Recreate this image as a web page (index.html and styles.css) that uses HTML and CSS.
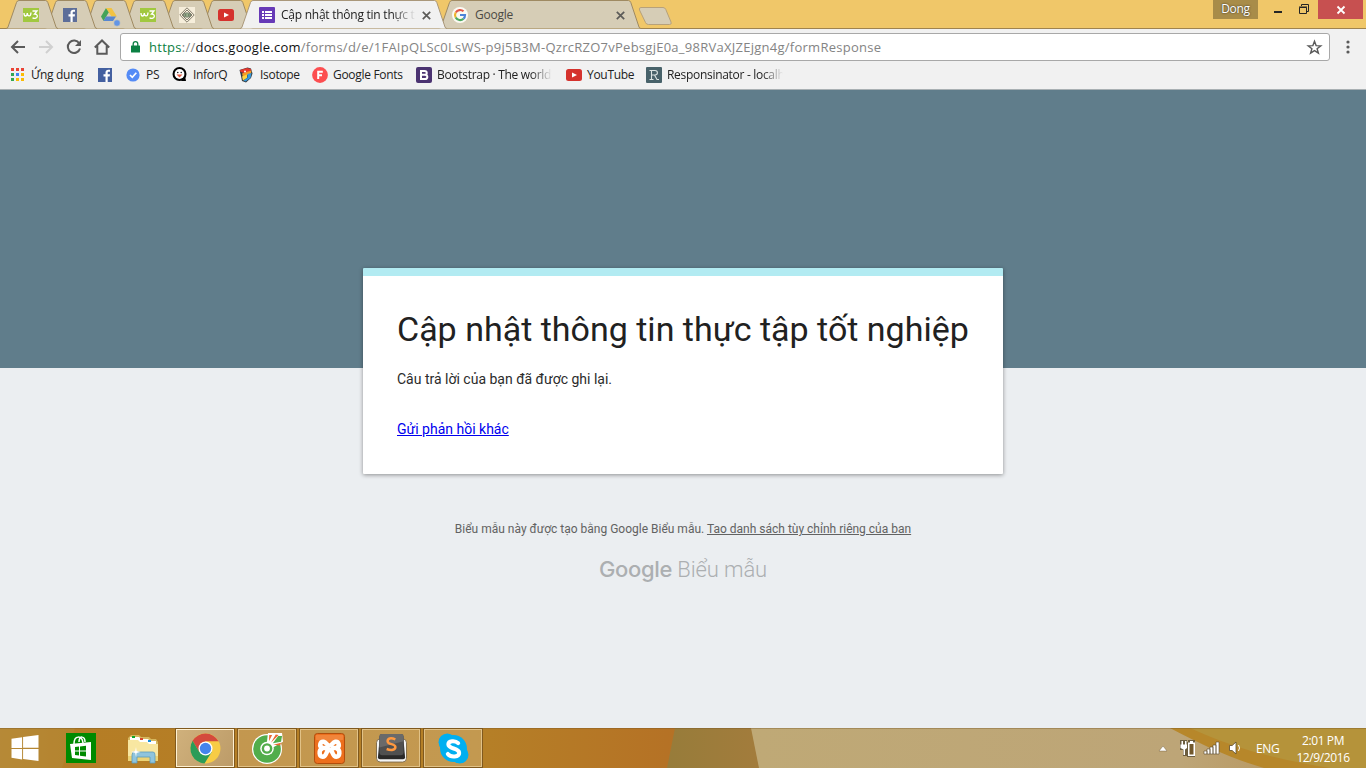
FILE: index.html
```html
<!DOCTYPE html>
<html lang="vi">
<head>
<meta charset="utf-8">
<title>Cập nhật thông tin thực tập tốt nghiệp</title>
<link rel="stylesheet" href="styles.css">
</head>
<body>
<svg width="0" height="0" class="defs">
  <defs>
    <symbol id="shape" viewBox="0 0 52 29"><path class="tab-shape" d="M0 28.500Q1.500 28.500 2 27L10.500 2.500Q11.200 .5 13 .5H39.500Q41 .5 41.800 2.500L50 27Q50.500 28.500 52 28.500"/></symbol>
    <symbol id="w3" viewBox="0 0 16 16"><path fill="#a1c83f" d="M0 1h16v14H0z"/><path fill="none" stroke="#fff" stroke-width="1.300" d="M1 6c0 4 3 4 3.300 0c.3 4 3.500 4 3.700-.5M9.500 4h4.500L11.500 7c4.500-.2 3.500 6-2 3.800"/></symbol>
    <symbol id="fb" viewBox="0 0 16 16"><path fill="currentColor" d="M1 1h14v14H1z"/><path fill="#fff" d="M8.500 15V9.500H6.500V7.300h2V5.500C8.500 3.500 9.700 2.700 11.300 2.700H13v2h-1.200c-.9 0-1.100.4-1.100 1.100v1.500H13l-.3 2.200h-2V15z"/></symbol>
    <symbol id="yt" viewBox="0 0 16 16"><rect y="2" width="16" height="12" rx="2.500" fill="#d5322d"/><path fill="#fff" d="M6 5.500v5L11 8z"/></symbol>
  </defs>
</svg>

<header class="browser">
  <div class="tabstrip">
    <div class="tab"><svg class="bg"><use href="#shape"/></svg><svg class="fav"><use href="#w3"/></svg></div>
    <div class="tab"><svg class="bg"><use href="#shape"/></svg><svg class="fav fb-muted"><use href="#fb"/></svg></div>
    <div class="tab"><svg class="bg"><use href="#shape"/></svg><svg class="fav" viewBox="0 0 16 16"><path fill="#43a35a" d="M5 1 0 9.500 2.500 14 8 5z"/><path fill="#f2c343" d="M5 1h5.500L16 9.500h-5.500z"/><path fill="#5786d1" d="M5 9.500h10L12 14H2.500z"/><circle cx="16" cy="16" r="3.200" fill="#6295e5" stroke="#d6cdb6" stroke-width=".5"/></svg></div>
    <div class="tab"><svg class="bg"><use href="#shape"/></svg><svg class="fav"><use href="#w3"/></svg></div>
    <div class="tab"><svg class="bg"><use href="#shape"/></svg><svg class="fav" viewBox="0 0 16 16"><path fill="#f6eedb" d="M0 0h16v16H0z"/><path fill="none" stroke="#756f60" stroke-width=".9" d="M8 .8 15.200 8 8 15.200.8 8zM8 3l5 5-5 5-5-5z"/><ellipse cx="8" cy="8" rx="3.800" ry="2.200" fill="#9bb08f" stroke="#5f685b" stroke-width=".7"/><path stroke="#34402f" stroke-width=".8" d="M5.800 8h1.500M9 8h1.500"/></svg></div>
    <div class="tab"><svg class="bg"><use href="#shape"/></svg><svg class="fav"><use href="#yt"/></svg></div>
    <div class="tab wide active">
      <svg class="bg" viewBox="0 0 210 29"><path class="tab-shape" d="M0 28.500Q1.500 28.500 2 27L10.500 2.500Q11.200 .5 13 .5H194.500Q196 .5 196.800 2.500L205 27Q205.500 28.500 207 28.500"/></svg>
      <svg class="fav" viewBox="0 0 16 16"><rect width="16" height="16" rx="1" fill="#673ab7"/><path fill="#fff" d="M3 4h2v2H3zm3 0h7v2H6zM3 7h2v2H3zm3 0h7v2H6zM3 10h2v2H3zm3 0h7v2H6z"/></svg>
      <span class="tab-title fade">Cập nhật thông tin thực t</span>
      <svg class="close" viewBox="0 0 9 9"><path d="m.8.8 7.400 7.400m0-7.400L.8 8.200"/></svg>
    </div>
    <div class="tab wide google">
      <svg class="bg" viewBox="0 0 210 29"><path class="tab-shape" d="M-2 28.500Q-.5 28.500 0 27L8.500 2.500Q9.200 .5 11 .5H187.500Q189 .5 189.800 2.500L198 27Q198.500 28.500 200 28.500"/></svg>
      <svg class="fav" viewBox="0 0 16 16"><circle cx="8" cy="8" r="8" fill="#fcfaf3"/><g fill="none" stroke-width="2.200"><path stroke="#e45847" d="M3.800 5.500A5 5 0 0 1 11.500 4.300"/><path stroke="#eeb52d" d="M3.700 5.500a5 5 0 0 0 0 5"/><path stroke="#4caa61" d="M3.700 10.500a5 5 0 0 0 7.800 1.200"/><path stroke="#4d83d8" d="M8 8h5c0 1.600-.5 2.800-1.500 3.700"/></g></svg>
      <span class="tab-title">Google</span>
      <svg class="close" viewBox="0 0 9 9"><path d="m.8.8 7.400 7.400m0-7.400L.8 8.200"/></svg>
    </div>
    <svg class="newtab" viewBox="0 0 34 18"><path d="M3 .5h22q2 0 2.800 2l5.200 12.500q1 2.500-1.500 2.500h-21q-2.200 0-3-2L1.500 3Q.7 .5 3 .5z"/></svg>
    <div class="window-controls">
      <span class="user">Dong</span>
      <svg class="min" viewBox="0 0 8 2"><path d="M0 0h8v2H0z"/></svg>
      <svg class="restore" viewBox="0 0 10 10"><path d="M2.500 2V.5h7v7H8M.5 3.500h7v6h-7z"/><path d="M0 3h8"/></svg>
      <span class="quit"><svg viewBox="0 0 8 8"><path d="m.5.5 7 7m0-7-7 7"/></svg></span>
    </div>
  </div>

  <div class="toolbar">
    <svg class="nav" viewBox="0 0 16 16"><path d="M15 8H2.500M8 2 2 8l6 6"/></svg>
    <svg class="nav disabled" viewBox="0 0 16 16"><path d="M1 8h12.500M8 2l6 6-6 6"/></svg>
    <svg class="nav" viewBox="0 0 16 16"><path d="M13.300 4.500A6.200 6.200 0 1 0 14 9.500"/><path class="solid" d="M15 1v6H9z"/></svg>
    <svg class="nav" viewBox="0 0 16 16"><path d="M.8 8.500 8 1.500l7.200 7M3.300 7v7.700h9.400V7"/></svg>
    <div class="omnibox">
      <svg class="lock" viewBox="0 0 9 12"><path fill="#0b8043" d="M.5 4.500h8q.5 0 .5.500v6q0 .5-.5.500h-8Q0 11.500 0 11V5q0-.5.500-.5z"/><path fill="none" stroke="#0b8043" stroke-width="1.300" d="M2.200 5V3a2.300 2.300 0 0 1 4.600 0v2"/></svg>
      <span class="url"><b class="secure">https</b>://<b>docs.google.com</b>/forms/d/e/1FAIpQLSc0LsWS-p9j5B3M-QzrcRZO7vPebsgjE0a_98RVaXJZEjgn4g/formResponse</span>
      <svg class="star" viewBox="0 0 15 15"><path d="m7.500 1.300 1.600 4.300 4.700.2-3.700 2.900 1.300 4.500-3.900-2.600-3.900 2.600 1.300-4.500L1.200 5.800l4.700-.2z"/></svg>
    </div>
    <svg class="menu" viewBox="0 0 4 14"><circle cx="2" cy="2" r="1.600"/><circle cx="2" cy="7" r="1.600"/><circle cx="2" cy="12" r="1.600"/></svg>
  </div>

  <nav class="bookmarks">
    <a class="apps"><svg viewBox="0 0 16 16"><path fill="#ea4335" d="M0 1h3v3H0zm5 0h3v3H5zm5 0h3v3h-3z"/><path fill="#34a853" d="M0 6h3v3H0zm0 5h3v3H0z"/><path fill="#4285f4" d="M5 6h3v3H5z"/><path fill="#fbbc05" d="M10 6h3v3h-3zm-5 5h3v3H5zm5 0h3v3h-3z"/></svg><span>Ứng dụng</span></a>
    <a class="facebook"><svg><use href="#fb"/></svg></a>
    <a class="ps"><svg viewBox="0 0 16 16"><circle cx="8" cy="8" r="6.600" fill="#548bf6"/><path fill="none" stroke="#fff" stroke-width="1.700" d="m5 8 2.300 2.300 4-4.500"/></svg><span>PS</span></a>
    <a class="inforq"><svg viewBox="0 0 16 16"><circle cx="7.500" cy="7" r="7" fill="#000"/><path fill="#000" d="M9 14h5l-1-5z"/><circle cx="7.500" cy="7" r="4.900" fill="#fff"/><circle cx="5.800" cy="5.500" r=".7"/><circle cx="9.200" cy="5.500" r=".7"/><path fill="#e3593f" d="M4.500 7.500h6L7.500 10.500z"/></svg><span>InforQ</span></a>
    <a class="isotope"><svg viewBox="0 0 16 16"><path fill="#343b42" d="m.5 3 8-2.500L12 1.500l1.500 5L12 11l-5 4.500L3 14 2 9z"/><path fill="#e5372d" d="m1 3 7-2 4 1-.5 3L5 6 1.500 5z"/><path fill="#f59b23" d="m3 6.500 6-2 3.500-1-.5 3L4 10z"/><path fill="#ffd43d" d="m3 9.500 5-2V11l-4 2.500z"/><path fill="#3699db" d="m8.500 7 4-1-1 5-5 3.500-2-1 4-3z"/><circle cx="6" cy="4.500" r="1" fill="#fff"/></svg><span>Isotope</span></a>
    <a class="fonts"><svg viewBox="0 0 16 16"><circle cx="8" cy="8" r="7.900" fill="#fc4e50"/><path fill="none" stroke="#fff" stroke-width="2" d="M6.200 12V4.800h4.600M6 8.300h4"/></svg><span>Google Fonts</span></a>
    <a class="bootstrap"><svg viewBox="0 0 16 16"><rect width="16" height="16" rx="2" fill="#4b3371"/><path fill="none" stroke="#fff" stroke-width="2" d="M5 4h3.500c3 0 3 3.800 0 3.800H5h4c3.200 0 3 4.200 0 4.200H5z"/></svg><span class="fade">Bootstrap · The world'</span></a>
    <a class="youtube"><svg><use href="#yt"/></svg><span>YouTube</span></a>
    <a class="responsinator"><svg viewBox="0 0 16 16"><rect width="16" height="16" rx="1" fill="#48626a"/><path fill="none" stroke="#dbe4e3" stroke-width="1.100" d="M3.500 3.500H9c3.200 0 3.200 4.500 0 4.500H6m-.5-4.500v9m-2 0h4M8.500 8l2.500 4.500h2"/></svg><span class="fade">Responsinator - localh</span></a>
  </nav>
</header>

<main class="page">
  <section class="card">
    <h1>Cập nhật thông tin thực tập tốt nghiệp</h1>
    <p>Câu trả lời của bạn đã được ghi lại.</p>
    <a href="#">Gửi phản hồi khác</a>
  </section>
  <p class="legal">Biểu mẫu này được tạo bằng Google Biểu mẫu. <a>Tao danh sách tùy chỉnh riêng của ban</a></p>
  <div class="brand"><span class="brand-name">Google</span><span class="brand-product">Biểu mẫu</span></div>
</main>

<footer class="taskbar">
  <svg class="wallpaper" viewBox="0 0 1366 40" preserveAspectRatio="none">
    <defs>
      <linearGradient id="wood"><stop stop-color="#b98b37"/><stop offset=".1" stop-color="#b57d25"/><stop offset=".7" stop-color="#b58027"/><stop offset="1" stop-color="#b57125"/></linearGradient>
      <linearGradient id="sand"><stop stop-color="#bfa976"/><stop offset=".7" stop-color="#bda577"/><stop offset="1" stop-color="#b58d4d"/></linearGradient>
      <linearGradient id="olive"><stop stop-color="#977c3a"/><stop offset="1" stop-color="#a37c3c"/></linearGradient>
    </defs>
    <path fill="url(#wood)" d="M0 0h680v40H0z"/><path fill="#b48837" opacity=".6" d="M0 0h75L62 40H0z"/>
    <path fill="url(#olive)" d="M675 0h78l8 40h-94z"/>
    <path fill="url(#sand)" d="M751 0h615v40H759z"/>
    <path fill="#b5933a" d="M1172 0h194v40h-76C1245 30 1205 15 1172 0z"/>
    <path fill="#b7872a" d="M1170 0h20c45 21 90 32 140 40h-66c-35-10-63-24-94-40z"/>
    <path stroke="#735225" stroke-opacity=".35" d="M0 .5h1366"/>
  </svg>
  <div class="launchers">
    <svg class="start" viewBox="0 0 28 28"><path fill="#fff" d="m0 4 11-1.600v11H0zm12-1.800L28 0v13.300H12zM0 14.400h11v11L0 23.700zm12 0h16V27l-16-2z"/></svg>
    <svg class="store" viewBox="0 0 30 30"><path fill="#008a00" d="M0 0h30v30H0z"/><path fill="#fff" d="m4 11 21-2v18L6 25z"/><path fill="none" stroke="#fff" stroke-width="1.500" d="M8 11c0-9 8-9 9-1M13 9c0-7 6-6 6 0"/><path fill="#008a00" d="m9 14 4-.5v4H9zm5-.6 6-.7v4.800h-6zM9 18.500h4v4L9 22zm5 0h6v5l-6-.8z"/></svg>
    <svg class="explorer" viewBox="0 0 32 30"><path fill="#d5b75e" d="M1 4 4 1h8l2 2h8l2 2h5l2 3v19H1z"/><path fill="#fff" d="M3 3h9l2 2h7l2 2h6v4H3z"/><path fill="#0aa52a" d="M5 2h3v2H5z"/><path fill="#d6482e" d="M13 4h3v2h-3z"/><path fill="#178ed8" d="M21 6h3v2h-3z"/><path fill="#f8e7a1" d="M1 6h10l2 2h7l2 2h9v17H1z"/><path fill="#ecd375" d="M1 22h30v5H1z"/><path fill="#8fc4dd" stroke="#5b9cbb" stroke-width=".8" d="M6 18h20q2 0 2 3v8h-5v-6H10v6H5v-8z"/><path fill="#fff" d="m9 13 .6 4 4 1-4 1L9 23l-.8-4-4.200-1 4.200-1z"/></svg>
    <div class="task current"><svg viewBox="0 0 30 30"><circle cx="15" cy="15" r="14.500" fill="#f7cc45"/><path fill="#d44a3d" d="M2.500 7.500A14.500 14.500 0 0 1 27.600 8H15L8.800 18.500z"/><path fill="#2b9c58" d="M2.500 7.500A14.500 14.500 0 0 0 14 29.500l7-11-12 0z"/><circle cx="15" cy="15" r="6.800" fill="#fff"/><circle cx="15" cy="15" r="5.500" fill="#4484ed"/></svg></div>
    <div class="task"><svg viewBox="0 0 32 32"><circle cx="15.500" cy="16.500" r="15.500" fill="#fff"/><circle cx="15.500" cy="16.500" r="14.300" fill="#52ad4b"/><path fill="#fff" d="m15 13 1.500-13H31l1 9-14 8z"/><circle cx="15.500" cy="16" r="7" fill="#fff"/><circle cx="15.500" cy="16" r="5.500" fill="#52ad4b"/><circle cx="15.500" cy="16" r="3" fill="#fff"/><path fill="#ec6933" d="m17.500 8.500.3-6.500h3zM22 12l8-2-1 3z"/><path fill="#ec6933" d="m19.500 10 5-8.500 3 .5z"/><path fill="#52ad4b" d="m21.500 10.500 5.500-7.500h4l-1 6z"/></svg></div>
    <div class="task"><svg viewBox="0 0 32 32"><rect x=".5" y=".5" width="31" height="31" rx="3" fill="#ed6f1d" stroke="#b04b0b"/><path fill="#f69b58" opacity=".5" d="M2 2h28v5Q16 11 2 7z"/><path fill="none" stroke="#fff" stroke-width="4.600" stroke-linejoin="round" stroke-linecap="round" d="M9 15.500C4.500 13.500 6.500 8.500 10 9c3 .5 3.500 4 6 4s3-3.500 6-4c3.500-.5 5.500 4.500 1 6.500h-3.500M23 15.500c5 2.500 3.500 9 0 9-4.500 0-3-7-7-7s-2.500 7-7 7c-3.500 0-5-6.500 0-9h4"/></svg></div>
    <div class="task"><svg viewBox="0 0 32 32"><rect x=".5" y="6" width="31" height="24" rx="4" fill="#f4f4f4" stroke="#806b48"/><path fill="#2a2928" d="M4 3h24l2 22q0 2-2 2H4q-2 0-2-2z"/><rect x="3.500" y="1" width="25" height="22" rx="2.500" fill="#505050"/><path fill="#6a6a6a" d="M6 1h20q2.500 0 2.500 2.500v5L3.500 15V3.500Q3.500 1 6 1z"/><path fill="none" stroke="#ff9940" stroke-width="2.600" d="M20 6.500c-5-2-8-1-8 2 0 4 8 2 8 6 0 3-4 4-9 2"/></svg></div>
    <div class="task"><svg viewBox="0 0 30 30"><circle cx="9" cy="9" r="8.500" fill="#00aff0"/><circle cx="21" cy="21" r="8.500" fill="#00aff0"/><circle cx="15" cy="15" r="13" fill="#00aff0"/><path fill="none" stroke="#fff" stroke-width="3.900" stroke-linecap="round" d="M19.500 9.800c-3-3-9.500-2.300-9.500 1.200 0 5 10.500 3 10.500 8.300 0 4-8 4.700-11 1"/></svg></div>
  </div>
  <div class="tray">
    <svg class="arrow" viewBox="0 0 8 5"><path fill="#fff" stroke="#665331" stroke-width=".4" d="M0 5 4 0l4 5z"/></svg>
    <svg class="power" viewBox="0 0 16 17"><path fill="#51452e" d="M0 0h7v2h1V0h7v17H7v-1H3v-6H0z" opacity=".75"/><path fill="#fff" d="M1.500 1H3v3.500H1.500zM5 1h1.500v3.500H5zM.5 4.500h6.500V8L5 9.500V15H3.500V9.500L.5 8zM10 1h3v1.500h2V16H8V2.500h2z"/><path fill="#71572b" d="M9.500 4h4v10.500h-4z"/></svg>
    <svg class="signal" viewBox="0 0 16 12"><path fill="#fff" stroke="#5c4b2c" stroke-width=".6" d="M0 9h3v3H0zm3-2h3v5H3zm3-2h3v7H6zm3-2h3v9H9zm3-3h3v12h-3z"/></svg>
    <svg class="sound" viewBox="0 0 13 14"><path fill="#fff" stroke="#5c4b2c" stroke-width=".8" d="M.5 4.500h2.700L7 1v12L3.200 9.500H.5z"/><path fill="none" stroke="#fff" d="M9.500 4q2 3 0 6"/></svg>
    <span class="language">ENG</span>
    <div class="clock"><span>2:01 PM</span><span>12/9/2016</span></div>
  </div>
</footer>
</body>
</html>
```

FILE: styles.css
```css
* { box-sizing: border-box; }
body {
  margin: 0;
  width: 1366px;
  height: 768px;
  overflow: hidden;
  display: flex;
  flex-direction: column;
  font-family: Roboto, sans-serif;
}
svg { display: block; flex: none; overflow: visible; }
.defs { position: absolute; }
.browser, .taskbar { font-family: "Open Sans", "Noto Sans", sans-serif; font-size: 12px; white-space: nowrap; }

/* Browser frame */
.browser { height: 90px; background: #f1f1f1; border-bottom: 1px solid #a9b0b3; }
.tabstrip { height: 29px; display: flex; padding-left: 6px; background: #f0c769; border-bottom: 1px solid #9f834f; }
.tab { position: relative; width: 52px; height: 29px; margin-right: -13px; padding: 7px 0 0 17px; display: flex; flex: none; }
.tab:nth-child(1) { z-index: 6; }
.tab:nth-child(2) { z-index: 5; }
.tab:nth-child(3) { z-index: 4; }
.tab:nth-child(4) { z-index: 3; }
.tab:nth-child(5) { z-index: 2; }
.tab:nth-child(6) { z-index: 1; }
.tab .bg { position: absolute; left: 0; top: 0; width: 52px; height: 29px; z-index: -1; }
.tab-shape { fill: #d6cdb6; stroke: #9f8a62; stroke-width: 1; }
.tab.wide { width: 210px; margin-right: -9px; padding-left: 19px; }
.tab.wide .bg { width: 210px; }
.tab.active { z-index: 9; }
.active .tab-shape { fill: #f1f1f1; stroke: #aa987b; }
.tab.google { z-index: 1; padding-left: 11px; }
.fav { width: 16px; height: 16px; }
.fb-muted { color: #5d6e99; }
.tab-title { width: 135px; margin: -1px 6px 0 6px; height: 18px; line-height: 18px; letter-spacing: -.25px; color: #222; }
.google .tab-title { color: #4c4a44; margin-left: 7px; }
.fade { -webkit-mask-image: linear-gradient(to right, #000 82%, transparent 100%); mask-image: linear-gradient(to right, #000 82%, transparent 100%); }
.close { width: 9px; height: 9px; margin-top: 4px; }
.close path { fill: none; stroke: #5c5b58; stroke-width: 1.700; }
.newtab { width: 34px; height: 18px; margin: 7px 0 0 -4px; }
.newtab path { fill: #d6cdb6; stroke: #b7a17a; }
.window-controls { display: flex; margin-left: auto; padding-right: 3px; }
.user { width: 45px; height: 19px; line-height: 18px; text-align: center; letter-spacing: -.3px; color: #fff; background: #a88c49; text-shadow: 0 0 2px #222; }
.min { width: 8px; height: 2px; margin: 11px 17px 0 16px; fill: #252525; }
.restore { width: 10px; height: 10px; margin: 4px 9px 0 0; }
.restore path { fill: none; stroke: #252525; }
.quit { width: 45px; height: 19px; display: grid; place-items: center; background: #c75050; }
.quit svg { width: 8px; height: 8px; }
.quit path { stroke: #fff; stroke-width: 1.800; }

.toolbar { height: 36px; display: flex; align-items: center; padding: 0 15px 0 10px; }
.nav { width: 16px; height: 16px; margin-right: 12px; fill: none; stroke: #5a5a5a; stroke-width: 2; }
.nav .solid { fill: #5a5a5a; stroke: none; }
.disabled { stroke: #d0d0d0; }
.omnibox { display: flex; align-items: center; width: 1210px; height: 28px; margin-left: -2px; padding: 0 7px 0 10px; background: #fff; border: 1px solid #a8a8a8; border-radius: 3px; }
.lock { width: 9px; height: 12px; }
.url { margin: -1px auto 0 9px; font-size: 13px; letter-spacing: .26px; color: #848484; }
.url b { font-weight: 400; color: #111; }
.url .secure { color: #0b8043; }
.star { width: 15px; height: 15px; fill: none; stroke: #5a5a5a; stroke-width: 1.400; }
.menu { width: 4px; height: 14px; margin-left: 16px; fill: #5a5a5a; }

.bookmarks { height: 24px; padding: 0 0 4px 11px; display: flex; }
.bookmarks a { display: flex; align-items: center; gap: 5px; letter-spacing: -.3px; color: #222; flex: none; }
.bookmarks svg { width: 16px; height: 16px; }
.bookmarks span { line-height: 17px; margin-top: -1px; }
.apps { width: 86px; }
.bookmarks .apps { gap: 4px; }
.bookmarks .facebook { width: 28px; color: #4460a0; }
.ps { width: 47px; }
.inforq { width: 67px; }
.isotope { width: 73px; }
.fonts { width: 104px; }
.bootstrap { width: 150px; }
.bootstrap span { width: 115px; }
.youtube { width: 80px; }
.responsinator { width: 140px; }
.responsinator span { width: 116px; }

/* Form response page */
.page { height: 638px; padding-top: 178px; display: flex; flex-direction: column; align-items: center; background: linear-gradient(#607d8b 278px, #ebeef1 278px); }
.card { width: 640px; height: 206px; padding: 35px 34px 0; border-top: 8px solid #b2ebf2; background: #fff; box-shadow: 0 1px 4px rgba(0, 0, 0, .4); border-radius: 1px; }
.card h1 { margin: 0; font-size: 34px; line-height: 36px; font-weight: 400; color: #212121; white-space: nowrap; }
.card p { margin: 22px 0 0; font-size: 14px; line-height: 20px; color: #2b2b2b; }
.card a { display: inline-block; margin-top: 30px; font-size: 14px; line-height: 20px; color: #0000ee; }
.legal { margin: 46px 0 0; font-size: 12px; line-height: 18px; color: #626262; }
.legal a { text-decoration: underline; }
.brand { display: flex; align-items: baseline; gap: 5px; margin-top: 15px; color: #acafb1; line-height: 32px; }
.brand-name { font: 500 22px/32px Inter, sans-serif; letter-spacing: -.3px; }
.brand-product { font-size: 22px; font-weight: 300; letter-spacing: -.1px; }

/* Desktop taskbar */
.taskbar { position: relative; z-index: 0; height: 40px; display: flex; color: #fff; }
.wallpaper { position: absolute; inset: 0; width: 1366px; height: 40px; z-index: -1; }
.launchers { display: flex; align-items: center; padding-left: 11px; }
.start { width: 28px; height: 27px; }
.store { width: 30px; height: 30px; margin-left: 27px; }
.explorer { width: 32px; height: 30px; margin: 2px 16px 0 31px; }
.task { width: 60px; height: 40px; margin-right: 2px; display: grid; place-items: center; background: rgba(218, 190, 143, .4); border: 1px solid #80591e; box-shadow: inset 0 0 0 1px rgba(255, 236, 191, .5); }
.task svg { width: 31px; height: 31px; }
.task.current { background: linear-gradient(120deg, #d0b17c, #bc9b68); box-shadow: inset 0 0 0 1px #fff1d2; }
.tray { display: flex; align-items: center; margin-left: auto; padding-right: 16px; }
.arrow { width: 8px; height: 5px; margin-right: 13px; }
.power { width: 16px; height: 17px; margin-right: 8px; }
.signal { width: 16px; height: 12px; margin-right: 9px; }
.sound { width: 13px; height: 14px; margin-right: 14px; }
.language { width: 24px; letter-spacing: -.3px; }
.clock { width: 54px; margin: 2px 0 0 16px; display: flex; flex-direction: column; align-items: center; line-height: 17px; letter-spacing: -.4px; }
```
